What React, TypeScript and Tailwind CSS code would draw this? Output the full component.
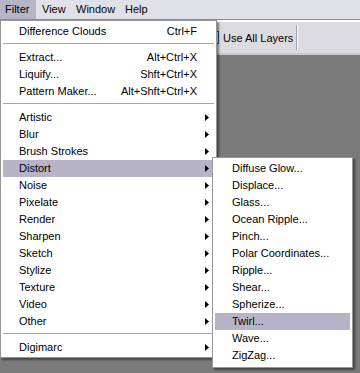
import React from "react";

type Item =
  | { kind: "sep" }
  | { kind: "item"; label: string; shortcut?: string; sub?: boolean; active?: boolean };

const filterMenu: Item[] = [
  { kind: "item", label: "Difference Clouds", shortcut: "Ctrl+F" },
  { kind: "sep" },
  { kind: "item", label: "Extract...", shortcut: "Alt+Ctrl+X" },
  { kind: "item", label: "Liquify...", shortcut: "Shft+Ctrl+X" },
  { kind: "item", label: "Pattern Maker...", shortcut: "Alt+Shft+Ctrl+X" },
  { kind: "sep" },
  { kind: "item", label: "Artistic", sub: true },
  { kind: "item", label: "Blur", sub: true },
  { kind: "item", label: "Brush Strokes", sub: true },
  { kind: "item", label: "Distort", sub: true, active: true },
  { kind: "item", label: "Noise", sub: true },
  { kind: "item", label: "Pixelate", sub: true },
  { kind: "item", label: "Render", sub: true },
  { kind: "item", label: "Sharpen", sub: true },
  { kind: "item", label: "Sketch", sub: true },
  { kind: "item", label: "Stylize", sub: true },
  { kind: "item", label: "Texture", sub: true },
  { kind: "item", label: "Video", sub: true },
  { kind: "item", label: "Other", sub: true },
  { kind: "sep" },
  { kind: "item", label: "Digimarc", sub: true },
];

const distortMenu = [
  "Diffuse Glow...",
  "Displace...",
  "Glass...",
  "Ocean Ripple...",
  "Pinch...",
  "Polar Coordinates...",
  "Ripple...",
  "Shear...",
  "Spherize...",
  "Twirl...",
  "Wave...",
  "ZigZag...",
];

function Arrow() {
  return (
    <svg width="4" height="7" viewBox="0 0 4 7" className="block">
      <path d="M0 0 L4 3.5 L0 7 Z" fill="#000" />
    </svg>
  );
}

export default function App() {
  return (
    <div
      className="relative w-[360px] h-[373px] overflow-hidden flex flex-col bg-[#7b7b7b] text-[11px] text-black"
      style={{ fontFamily: '"Liberation Sans", Arial, sans-serif' }}
    >
      {/* Menu bar */}
      <div className="h-[19px] flex items-stretch bg-[#e0e0e9] shrink-0">
        <div className="w-[36px] pl-[5px] flex items-center bg-[#b7b4c9]">Filter</div>
        <div className="w-[34px] pl-[6px] flex items-center">View</div>
        <div className="w-[49px] pl-[6px] flex items-center">Window</div>
        <div className="pl-[6px] flex items-center">Help</div>
      </div>

      {/* Options bar */}
      <div className="h-px bg-[#8a8a8a] shrink-0" />
      <div className="h-[2px] bg-white shrink-0" />
      <div className="h-[31px] bg-[#dcdbe1] flex items-center shrink-0 pl-[206px]">
        <div className="w-[13px] h-[13px] border border-[#1c5180] bg-white" />
        <span className="ml-[4px] mt-[1px] w-[73px]">Use All Layers</span>
        <div className="h-[25px] w-[2px] border-l border-[#a0a0a0] border-r border-r-white" />
      </div>
      <div className="h-[2px] bg-[#c9cbcb] shrink-0" />

      {/* Workspace */}
      <div className="flex-1 bg-[#7b7b7b]" />

      {/* Filter menu */}
      <div className="absolute left-0 top-[20px] w-[217px] bg-white border border-[#979797] pt-[2px] pb-px px-[2px] shadow-[2px_2px_2px_rgba(0,0,0,0.45)]">
        {filterMenu.map((it, i) =>
          it.kind === "sep" ? (
            <div key={i} className="h-[9px] pt-[3px]">
              <div className="h-px bg-[#a6a6a6]" />
            </div>
          ) : (
            <div
              key={i}
              className={`h-[17px] flex items-center pl-[16px] ${it.active ? "bg-[#b7b4c9]" : ""}`}
            >
              <span className="flex-1 whitespace-nowrap">{it.label}</span>
              {it.shortcut && <span className="whitespace-nowrap">{it.shortcut}</span>}
              <div className="w-[17px] flex justify-end pr-[5px]">{it.sub && <Arrow />}</div>
            </div>
          )
        )}
      </div>

      {/* Distort submenu */}
      <div className="absolute left-[212px] top-[157px] w-[141px] bg-white border border-[#979797] pt-[2px] pb-[3px] px-[2px] shadow-[2px_2px_2px_rgba(0,0,0,0.45)]">
        {distortMenu.map((label) => (
          <div
            key={label}
            className={`h-[17px] flex items-center pl-[17px] whitespace-nowrap ${label === "Twirl..." ? "bg-[#b7b4c9]" : ""}`}
          >
            {label}
          </div>
        ))}
      </div>
    </div>
  );
}
